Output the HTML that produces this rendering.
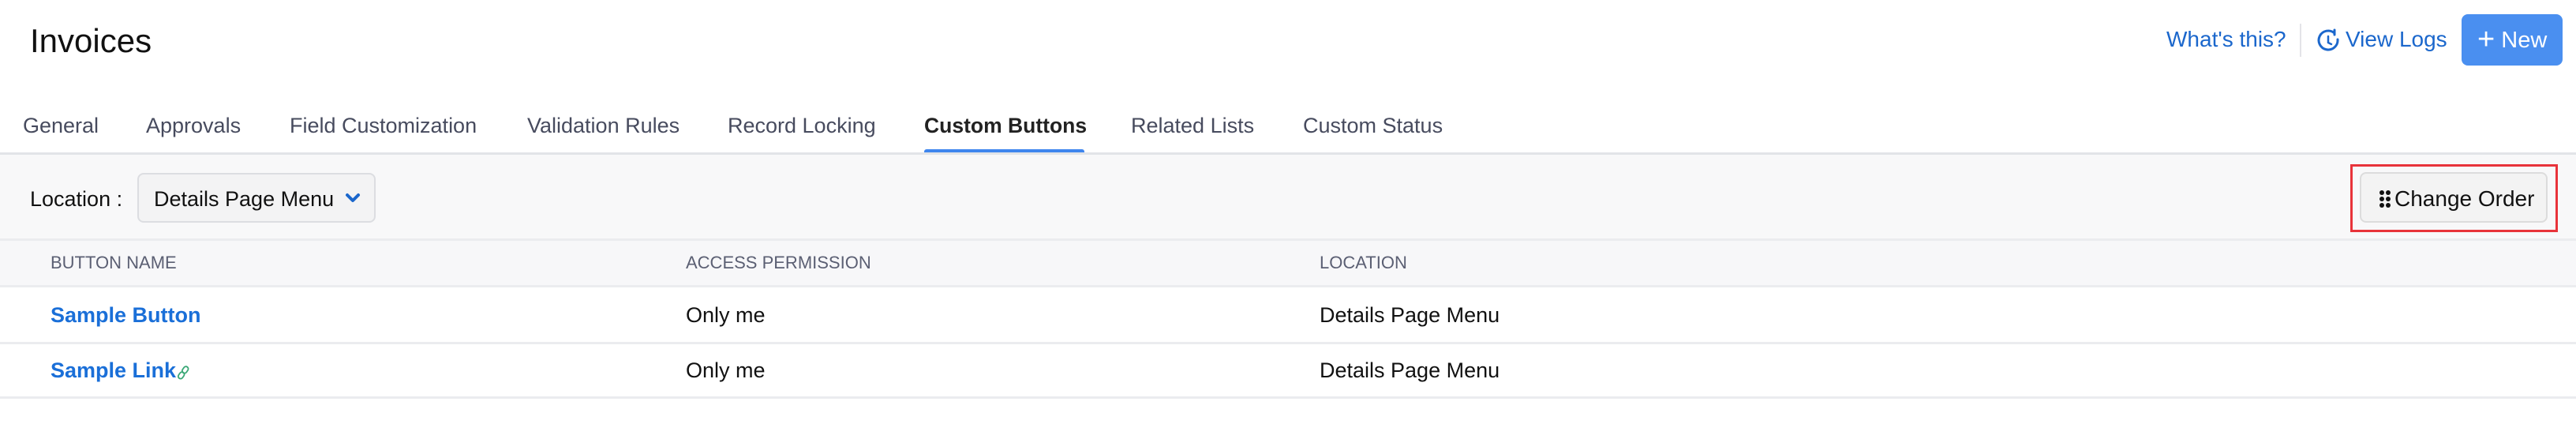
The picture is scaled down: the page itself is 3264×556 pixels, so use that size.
<!DOCTYPE html>
<html><head><meta charset="utf-8"><style>
*{margin:0;padding:0;box-sizing:border-box}
body{width:3264px;height:556px;background:#fff;font-family:"Liberation Sans",sans-serif;position:relative;overflow:hidden;color:#111}
.a{position:absolute;white-space:nowrap}
.tab{position:absolute;top:143px;font-size:27px;color:#474b5e;line-height:32px}
.th{position:absolute;top:321px;font-size:22px;color:#5b5f73;line-height:24px}
.td{position:absolute;font-size:27px;line-height:32px;color:#111}
.lk{color:#1a6fd8;font-weight:bold}
</style></head><body>
<div class="a" style="left:38px;top:28px;font-size:42px;line-height:48px;color:#111">Invoices</div>

<div class="a" style="left:2745px;top:34px;font-size:28px;line-height:32px;color:#1b67cc">What's this?</div>
<div class="a" style="left:2914px;top:30px;width:2px;height:42px;background:#e4e4e8"></div>
<svg class="a" style="left:2936px;top:36px" width="30" height="32" viewBox="0 0 30 32"><path d="M22 6 A12 12 0 1 0 26 14" fill="none" stroke="#1b67cc" stroke-width="3" stroke-linecap="round"/><path d="M22 2 L22 8" stroke="#1b67cc" stroke-width="3" stroke-linecap="round"/><path d="M14 10 L14 18 L18 20" fill="none" stroke="#1b67cc" stroke-width="2.5" stroke-linecap="round"/></svg>
<div class="a" style="left:2972px;top:34px;font-size:28px;line-height:32px;color:#1b67cc">View Logs</div>
<div class="a" style="left:3119px;top:18px;width:128px;height:65px;background:#4a8ff0;border-radius:8px;color:#fff;font-size:29px;line-height:65px;padding-left:20px"><span style="font-size:38px;font-weight:300;vertical-align:-2px">+</span> New</div>

<div class="tab" style="left:29px">General</div>
<div class="tab" style="left:185px">Approvals</div>
<div class="tab" style="left:367px">Field Customization</div>
<div class="tab" style="left:668px">Validation Rules</div>
<div class="tab" style="left:922px">Record Locking</div>
<div class="tab" style="left:1171px;font-weight:bold;color:#222;font-size:26.5px">Custom Buttons</div>
<div class="tab" style="left:1433px">Related Lists</div>
<div class="tab" style="left:1651px">Custom Status</div>
<div class="a" style="left:1171px;top:189px;width:203px;height:5px;background:#3f86ee;border-radius:3px 3px 0 0"></div>
<div class="a" style="left:0;top:193px;width:3264px;height:3px;background:#e2e4e8"></div>

<div class="a" style="left:0;top:196px;width:3264px;height:106px;background:#f8f8f9"></div>
<div class="a" style="left:38px;top:236px;font-size:27px;line-height:32px">Location :</div>
<div class="a" style="left:174px;top:219px;width:302px;height:63px;background:#f3f3f4;border:2px solid #dcdde1;border-radius:8px"></div>
<div class="a" style="left:195px;top:236px;font-size:27px;line-height:32px">Details Page Menu</div>
<svg class="a" style="left:437px;top:244px" width="20" height="14" viewBox="0 0 20 14"><path d="M3 3 L10 10 L17 3" fill="none" stroke="#1b67cc" stroke-width="4" stroke-linecap="round" stroke-linejoin="round"/></svg>

<div class="a" style="left:2978px;top:208px;width:263px;height:86px;border:3px solid #e8333a"></div>
<div class="a" style="left:2990px;top:218px;width:238px;height:64px;background:#f3f3f3;border:2px solid #dcdcdc;border-radius:8px"></div>
<svg class="a" style="left:3014px;top:240px" width="16" height="24" viewBox="0 0 16 24"><g fill="#111"><circle cx="4" cy="4" r="3"/><circle cx="12" cy="4" r="3"/><circle cx="4" cy="12" r="3"/><circle cx="12" cy="12" r="3"/><circle cx="4" cy="20" r="3"/><circle cx="12" cy="20" r="3"/></g></svg>
<div class="a" style="left:3034px;top:235px;font-size:28px;line-height:34px">Change Order</div>

<div class="a" style="left:0;top:302px;width:3264px;height:3px;background:#ebecef"></div>
<div class="a" style="left:0;top:305px;width:3264px;height:57px;background:#f7f7f9"></div>
<div class="th" style="left:64px">BUTTON NAME</div>
<div class="th" style="left:869px">ACCESS PERMISSION</div>
<div class="th" style="left:1672px">LOCATION</div>
<div class="a" style="left:0;top:361px;width:3264px;height:3px;background:#ebecef"></div>

<div class="td lk" style="left:64px;top:383px">Sample Button</div>
<div class="td" style="left:869px;top:383px">Only me</div>
<div class="td" style="left:1672px;top:383px">Details Page Menu</div>
<div class="a" style="left:0;top:433px;width:3264px;height:3px;background:#ebecef"></div>

<div class="td lk" style="left:64px;top:453px">Sample Link</div>
<svg class="a" style="left:224px;top:462px" width="18" height="20" viewBox="0 0 18 20"><g fill="none" stroke="#3aa876" stroke-width="1.8"><rect x="8" y="2" width="6" height="9" rx="3" transform="rotate(35 11 6)"/><rect x="3" y="9" width="6" height="9" rx="3" transform="rotate(35 6 13)"/></g></svg>
<div class="td" style="left:869px;top:453px">Only me</div>
<div class="td" style="left:1672px;top:453px">Details Page Menu</div>
<div class="a" style="left:0;top:502px;width:3264px;height:3px;background:#ebecef"></div>
</body></html>
